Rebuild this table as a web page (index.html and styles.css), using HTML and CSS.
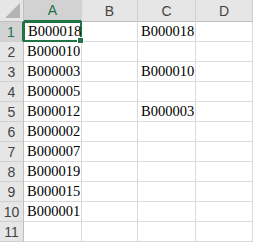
FILE: index.html
```html
<!DOCTYPE html>
<html lang="en">
<head>
    <meta charset="UTF-8">
    <title>Sheet1</title>
    <link rel="stylesheet" href="styles.css">
</head>
<body>
    <div class="sheet">
        <div class="corner"><span class="corner-mark"></span></div>
        <div class="col-head active">A</div>
        <div class="col-head">B</div>
        <div class="col-head">C</div>
        <div class="col-head">D</div>

        <div class="row-head active">1</div>
        <div class="cell selected">B000018</div>
        <div class="cell"></div>
        <div class="cell">B000018</div>
        <div class="cell"></div>

        <div class="row-head">2</div>
        <div class="cell">B000010</div>
        <div class="cell"></div>
        <div class="cell"></div>
        <div class="cell"></div>

        <div class="row-head">3</div>
        <div class="cell">B000003</div>
        <div class="cell"></div>
        <div class="cell">B000010</div>
        <div class="cell"></div>

        <div class="row-head">4</div>
        <div class="cell">B000005</div>
        <div class="cell"></div>
        <div class="cell"></div>
        <div class="cell"></div>

        <div class="row-head">5</div>
        <div class="cell">B000012</div>
        <div class="cell"></div>
        <div class="cell">B000003</div>
        <div class="cell"></div>

        <div class="row-head">6</div>
        <div class="cell">B000002</div>
        <div class="cell"></div>
        <div class="cell"></div>
        <div class="cell"></div>

        <div class="row-head">7</div>
        <div class="cell">B000007</div>
        <div class="cell"></div>
        <div class="cell"></div>
        <div class="cell"></div>

        <div class="row-head">8</div>
        <div class="cell">B000019</div>
        <div class="cell"></div>
        <div class="cell"></div>
        <div class="cell"></div>

        <div class="row-head">9</div>
        <div class="cell">B000015</div>
        <div class="cell"></div>
        <div class="cell"></div>
        <div class="cell"></div>

        <div class="row-head">10</div>
        <div class="cell">B000001</div>
        <div class="cell"></div>
        <div class="cell"></div>
        <div class="cell"></div>

        <div class="row-head">11</div>
        <div class="cell"></div>
        <div class="cell"></div>
        <div class="cell"></div>
        <div class="cell"></div>
    </div>
</body>
</html>
```

FILE: styles.css
```css
* {
    box-sizing: border-box;
}

body {
    margin: 0;
    background: #ffffff;
}

.sheet {
    display: grid;
    grid-template-columns: 24px 58px 56px 58px 57px;
    grid-template-rows: 22px repeat(11, 20px);
    width: 253px;
    border-right: 1px solid #d4d4d4;
}

/* top-left box with the select-all triangle */
.corner {
    position: relative;
    background: #e6e6e6;
    border-right: 1px solid #bfbfbf;
    border-bottom: 1px solid #bfbfbf;
}

.corner-mark {
    position: absolute;
    right: 3px;
    bottom: 3px;
    width: 0;
    height: 0;
    border-left: 15px solid transparent;
    border-bottom: 15px solid #b4b4b4;
}

.col-head,
.row-head {
    display: flex;
    align-items: center;
    justify-content: center;
    background: #e6e6e6;
    color: #444444;
    font-family: "Liberation Sans", Arial, sans-serif;
    font-size: 14px;
}

.col-head {
    border-right: 1px solid #d0d0d0;
    border-bottom: 1px solid #bfbfbf;
}

.row-head {
    border-right: 1px solid #bfbfbf;
    border-bottom: 1px solid #d0d0d0;
    padding-top: 1px;
}

.col-head.active {
    background: #d2d2d2;
    color: #217346;
    border-bottom: 2px solid #217346;
}

.row-head.active {
    background: #d2d2d2;
    color: #217346;
    border-right: 2px solid #217346;
}

.cell {
    display: flex;
    align-items: flex-end;
    padding: 0 0 1px 3px;
    border-right: 1px solid #dadada;
    border-bottom: 1px solid #dadada;
    font-family: "Liberation Serif", "Times New Roman", serif;
    font-size: 14.5px;
    line-height: 18px;
    color: #000000;
    white-space: nowrap;
}

/* active cell outline and fill handle */
.selected {
    position: relative;
    border: 2px solid #217346;
    margin: -1px 0 0 -1px;
    padding-left: 3px;
    padding-bottom: 0;
}

.selected::after {
    content: "";
    position: absolute;
    right: -4px;
    bottom: -4px;
    width: 5px;
    height: 5px;
    background: #217346;
    border: 1px solid #ffffff;
}
```
